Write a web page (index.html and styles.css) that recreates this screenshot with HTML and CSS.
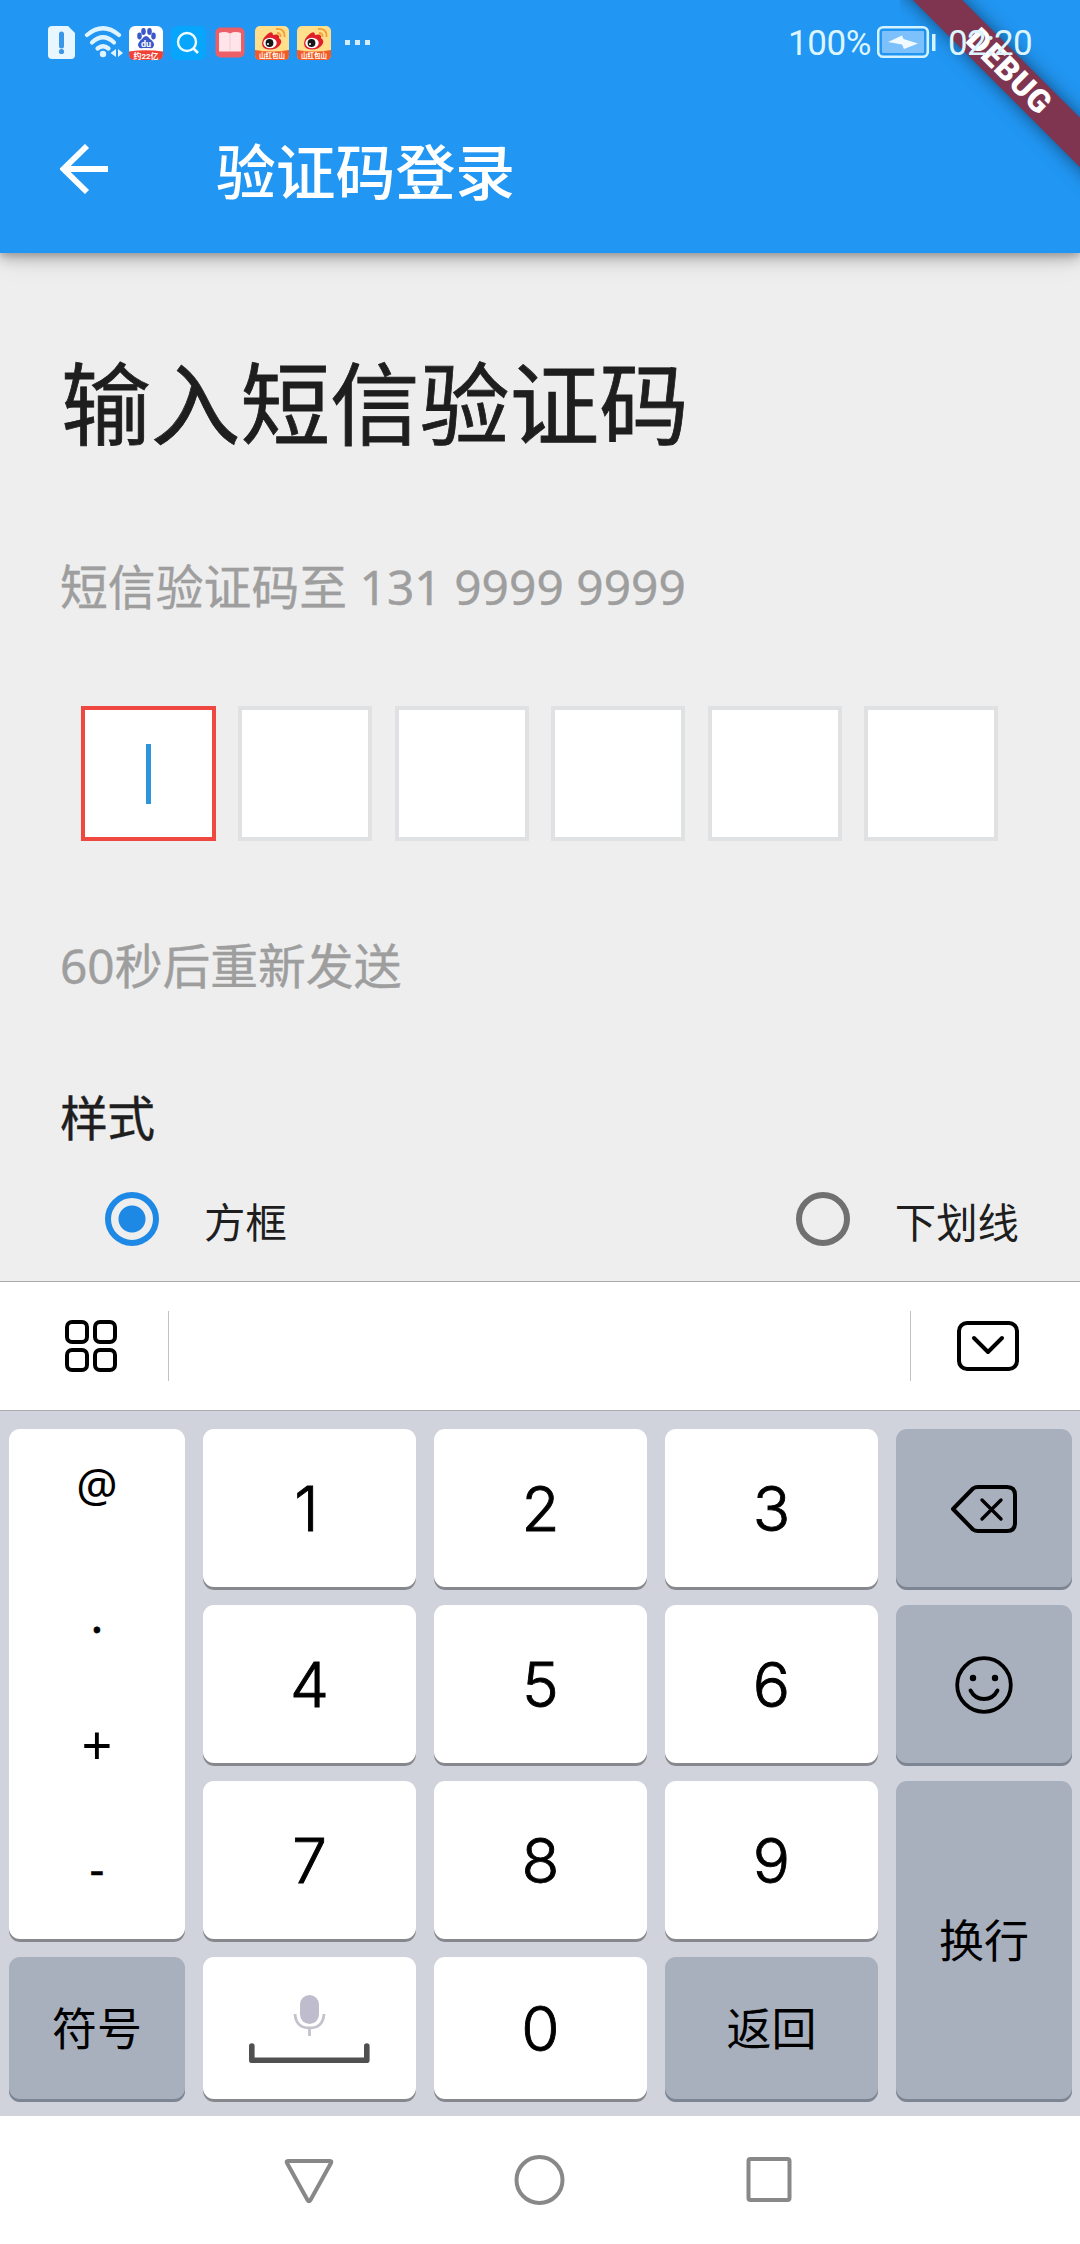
FILE: index.html
```html
<!DOCTYPE html>
<html lang="zh-CN">
<head>
<meta charset="utf-8">
<title>验证码登录</title>
<link rel="stylesheet" href="styles.css">
</head>
<body>
<div class="screen">
  <header class="app-bar">
    <div class="status-bar">
      <svg class="status-icons" width="330" height="40" viewBox="45 22 330 40">
        <path d="M52 26H68L75 33V55Q75 59 71 59H52Q48 59 48 55V30Q48 26 52 26Z" fill="#e8f6ff"/>
        <path d="M61.500 34V46" stroke="#3a96e6" stroke-width="5" stroke-linecap="round"/>
        <circle cx="61.500" cy="51.500" r="2.600" fill="#3a96e6"/>
        <g fill="none" stroke="#e0f4ff" stroke-width="4.200" stroke-linecap="round">
          <path d="M87 35Q103 21.500 119 35"/><path d="M92 42.500Q103 32 114 42.500"/><path d="M97.500 48.500Q103 44 108.500 48.500"/>
        </g>
        <circle cx="103" cy="54" r="3.200" fill="#e0f4ff"/>
        <path d="M116 49V57L110.500 53ZM118 49V57L123 53Z" fill="#e0f4ff"/>
        <rect x="129" y="26" width="34" height="34" rx="6" fill="#fff"/>
        <path d="M129 51.500Q146 49 163 51.500V54Q163 60 157 60H135Q129 60 129 54Z" fill="#ef4136"/>
        <g fill="#3c57c8"><ellipse cx="139.500" cy="36" rx="2.300" ry="3.400"/><ellipse cx="143.500" cy="31.500" rx="2.300" ry="3.400"/><ellipse cx="149.500" cy="31.500" rx="2.300" ry="3.400"/><ellipse cx="153.500" cy="36" rx="2.300" ry="3.400"/><path d="M146 36Q148 36 150 39Q154.500 42 154 45.500Q153 49 149 48H143Q139 49 138 45.500Q138 42 142 39Q144 36 146 36Z"/></g>
        <text class="icon-du" x="146" y="47">du</text>
        <text class="icon-sale" x="146" y="58.500">约22亿</text>
        <rect x="171" y="26" width="35" height="34" rx="6" fill="#07a5fb"/>
        <circle cx="187" cy="42" r="9" fill="none" stroke="#f0fbff" stroke-width="2.400"/><path d="M193.500 48.500L198 53" stroke="#f0fbff" stroke-width="2.600"/>
        <rect x="215.500" y="27.500" width="29" height="30" rx="5" fill="#ec5f67"/>
        <path d="M219 33Q225 31 230 33.500Q235 31 241 33V51.500H219Z" fill="#ffe4ea"/><path d="M230 34V51" stroke="#f8c9d3" stroke-width="1"/>
        <g id="weibo">
          <rect x="255" y="26" width="34" height="34" rx="5" fill="#ffdf8c"/>
          <path d="M255 50Q272 53 289 50V55Q289 60 284 60H260Q255 60 255 55Z" fill="#f15a24"/>
          <path d="M262 43Q263 37 269 33Q273 31 273 35Q280 33 279 38Q283 41 280 45Q276 50 269 49.500Q262 49 262 43Z" fill="#df2029"/>
          <ellipse cx="270" cy="43" rx="6.700" ry="5.200" fill="#fff"/><circle cx="269.500" cy="43" r="3.900" fill="#171717"/><circle cx="268" cy="44" r="1" fill="#fff"/>
          <path d="M276 29Q285 28 284.500 37M277 33Q281 33 280.500 37" fill="none" stroke="#efa03a" stroke-width="1.800"/>
          <text class="icon-sale weibo-sale" x="272" y="58">山红包山</text>
        </g>
        <use href="#weibo" x="42"/>
        <path d="M345 40h5v5h-5zM355 40h5v5h-5zM365 40h5v5h-5z" fill="#d3edff"/>
      </svg>
      <div class="status-right">
        <span class="battery-level">100%</span>
        <svg width="60" height="34" viewBox="877 25 60 34">
          <rect x="878.200" y="27.200" width="49.600" height="29.600" rx="5" fill="none" stroke="#d5f4ff" stroke-width="2.600"/>
          <rect x="882" y="31" width="42" height="22" rx="1" fill="#7cc1fb"/>
          <path d="M888 42L902 35.500L903.500 39L918 43.500L904 49L902 44.500Z" fill="#f1fbff"/>
          <path d="M932 34H935.500V51H932Z" fill="#d5f4ff"/>
        </svg>
        <span class="clock">02:20</span>
      </div>
    </div>
    <div class="title-bar">
      <svg width="50" height="50" viewBox="60 144 50 50"><path d="M108 169H64M87 146L63.500 169L87 192" fill="none" stroke="#fff" stroke-width="5.800"/></svg>
      <h1 class="page-title">验证码登录</h1>
    </div>
    <div class="debug-corner"><div class="debug-banner">DEBUG</div></div>
  </header>

  <main class="content">
    <h2 class="heading">输入短信验证码</h2>
    <p class="hint">短信验证码至 131 9999 9999</p>
    <div class="code-row">
      <div class="code-box focused"><i class="caret"></i></div>
      <div class="code-box"></div><div class="code-box"></div><div class="code-box"></div><div class="code-box"></div><div class="code-box"></div>
    </div>
    <p class="resend">60秒后重新发送</p>
    <p class="style-label">样式</p>
    <div class="radio-row">
      <div class="option"><span class="radio checked"></span><span>方框</span></div>
      <div class="option"><span class="radio"></span><span>下划线</span></div>
    </div>
  </main>

  <section class="keyboard">
    <div class="tools">
      <div class="tool-menu"><svg width="52" height="52" viewBox="0 0 52 52" fill="none" stroke="#000" stroke-width="4"><rect x="2" y="2" width="20" height="20" rx="5"/><rect x="30" y="2" width="20" height="20" rx="5"/><rect x="2" y="30" width="20" height="20" rx="5"/><rect x="30" y="30" width="20" height="20" rx="5"/></svg></div>
      <div class="tool-hide"><svg width="62" height="50" viewBox="0 0 62 50" fill="none" stroke="#000" stroke-width="4" stroke-linecap="round" stroke-linejoin="round"><rect x="2" y="2" width="58" height="46" rx="8"/><path d="M17 17L31 31L45 17"/></svg></div>
    </div>
    <div class="keys">
      <div class="key symbols"><span class="at">@</span><span class="dot">.</span><span class="plus">+</span><span class="minus">-</span></div>
      <div class="key one">1</div><div class="key">2</div><div class="key">3</div>
      <div class="key dark"><svg width="66" height="50" viewBox="951 1484 66 50" fill="none" stroke="#000" stroke-width="4" stroke-linecap="round" stroke-linejoin="round"><path d="M953 1509L973 1488.500Q975 1487 978 1487H1007Q1015 1487 1015 1495V1523Q1015 1531 1007 1531H978Q975 1531 973 1529.500Z"/><path d="M982 1500L1001 1519M1001 1500L982 1519" stroke-width="3.400"/></svg></div>
      <div class="key">4</div><div class="key">5</div><div class="key">6</div>
      <div class="key dark"><svg width="58" height="58" viewBox="0 0 58 58" fill="none" stroke="#000" stroke-width="3.800" stroke-linecap="round"><circle cx="29" cy="29" r="26.800"/><circle cx="18" cy="22" r="3.200" fill="#000" stroke="none"/><circle cx="40" cy="22" r="3.200" fill="#000" stroke="none"/><path d="M15.500 34.500Q20 43 29 43Q38 43 42.500 34.500"/></svg></div>
      <div class="key">7</div><div class="key">8</div><div class="key">9</div>
      <div class="key dark word enter">换行</div>
      <div class="key dark word">符号</div>
      <div class="key"><svg width="121" height="70" viewBox="249 1994 121 70"><rect x="300" y="1995" width="19" height="29" rx="9.500" fill="#bfbdcd"/><path d="M295 2014Q296 2028 309.500 2028Q323 2028 324 2014M309.500 2028V2036" fill="none" stroke="#c3c2cd" stroke-width="2.800"/><path d="M251.800 2046V2060.200H366.800V2046" fill="none" stroke="#505050" stroke-width="5.600" stroke-linecap="round" stroke-linejoin="round"/></svg></div>
      <div class="key">0</div>
      <div class="key dark word">返回</div>
    </div>
  </section>

  <nav class="nav-bar">
    <svg width="52" height="52" viewBox="0 0 52 52"><path d="M5 7H47Q49 7 48 9L27.500 46Q26 48.500 24.500 46L4 9Q3 7 5 7Z"/></svg>
    <svg width="52" height="52" viewBox="0 0 52 52"><circle cx="26.500" cy="26" r="23"/></svg>
    <svg width="52" height="52" viewBox="0 0 52 52"><rect x="5.500" y="5" width="41" height="41" rx="2"/></svg>
  </nav>
</div>
</body>
</html>
```
FILE: styles.css
```css
* { box-sizing: border-box; }
body { margin: 0; background: #eee; }
h1, h2, p { margin: 0; font-weight: 400; }
svg { display: block; flex: none; }

.screen {
  width: 1080px;
  height: 2244px;
  display: flex;
  flex-direction: column;
  overflow: hidden;
  font-family: "Noto Sans", "Noto Sans CJK SC", sans-serif;
  color: #1e1e1e;
}

/* App bar */
.app-bar {
  position: relative;
  height: 253px;
  flex: none;
  background: #2196f3;
  box-shadow: 0 6px 12px rgba(0, 0, 0, .22), 0 12px 24px -2px rgba(0, 0, 0, .08), 0 3px 5px rgba(0, 0, 0, .12);
}
.status-bar {
  position: relative;
  z-index: 2;
  height: 84px;
  display: flex;
  justify-content: space-between;
  align-items: center;
  padding: 0 48px 0 45px;
}
.status-right {
  display: flex;
  align-items: center;
  font: 35px/40px Roboto, sans-serif;
  color: #dcf5ff;
}
.battery-level { width: 89px; margin-top: 4px; letter-spacing: -.4px; }
.clock { width: 84px; margin: 4px 0 0 11px; white-space: nowrap; letter-spacing: -.6px; }
.icon-du { font: 700 9px Roboto, sans-serif; fill: #fff; text-anchor: middle; }
.icon-sale { font: 700 8px Roboto, "Noto Sans CJK SC", sans-serif; fill: #fff; text-anchor: middle; }
.weibo-sale { font-size: 6.5px; }
.title-bar {
  height: 169px;
  display: flex;
  align-items: flex-start;
  gap: 106px;
  padding: 60px 0 0 60px;
}
.page-title {
  margin-top: -2px;
  font-size: 59.8px;
  line-height: 60px;
  font-weight: 500;
  color: #fff;
}
.debug-corner {
  position: absolute;
  z-index: 1;
  top: 0;
  right: 0;
  width: 180px;
  height: 240px;
  overflow: hidden;
}
.debug-banner {
  position: absolute;
  left: -91.5px;
  top: 54px;
  width: 400px;
  height: 35px;
  transform: rotate(45deg);
  background: #7f3550;
  box-shadow: 0 0 18px rgba(0, 0, 0, .5);
  font: 900 32px/35px Roboto, sans-serif;
  letter-spacing: .7px;
  text-align: center;
  color: #fff;
}

/* Verification form */
.content {
  flex: 1;
  background: #eee;
  padding: 105px 60px 0;
  position: relative;
  z-index: -1;
}
.heading {
  height: 90px;
  padding-left: 1px;
  font-size: 89.7px;
  line-height: 90px;
  -webkit-text-stroke: .8px currentColor;
}
.hint, .resend, .style-label { height: 48px; font-size: 47.8px; line-height: 48px; }
.hint { margin-top: 115px; color: #9e9e9e; letter-spacing: .05px; -webkit-text-stroke: .4px currentColor; }
.code-row {
  display: flex;
  justify-content: space-between;
  margin-top: 95px;
  padding: 0 22px 0 21px;
}
.code-box {
  width: 134px;
  height: 135px;
  border: 4px solid #e0e1e2;
  background: #fff;
  display: flex;
  align-items: center;
  justify-content: center;
}
.code-box.focused { width: 135px; border-color: #ee4840; }
.caret { width: 5px; height: 60px; background: #2e94db; }
.resend { margin-top: 101px; color: #9e9e9e; -webkit-text-stroke: .4px currentColor; }
.style-label { margin-top: 104px; letter-spacing: -.6px; -webkit-text-stroke: .4px currentColor; }
.radio-row {
  display: flex;
  justify-content: space-between;
  margin-top: 50px;
  padding: 0 1px 0 45px;
}
.option {
  display: flex;
  align-items: center;
  gap: 45px;
  height: 54px;
  font-size: 41.4px;
  line-height: 46px;
}
.option span + span { margin-top: 5px; }
.radio {
  width: 54px;
  height: 54px;
  border: 6px solid #707070;
  border-radius: 50%;
}
.radio.checked {
  border-color: #1e88e5;
  background: radial-gradient(circle, #1e88e5 13px, transparent 14px);
}

/* Keyboard */
.keyboard { flex: none; height: 835px; background: #d1d3dc; }
.tools {
  height: 130px;
  background: #fff;
  border-top: 1px solid #a9a9a9;
  border-bottom: 1px solid #acacb0;
  display: flex;
  justify-content: space-between;
  align-items: center;
}
.tool-menu, .tool-hide { display: flex; align-items: center; height: 70px; }
.tool-menu { width: 169px; padding-left: 65px; border-right: 1px solid #c2c2c2; }
.tool-hide { width: 170px; padding-left: 46px; border-left: 1px solid #c2c2c2; }
.keys {
  display: grid;
  grid-template-columns: 176px 213px 213px 213px 176px;
  grid-template-rows: 161.5px 161.5px 161.5px 145px;
  gap: 14.5px 18px;
  padding: 17.5px 8px 0 9px;
}
.key {
  display: flex;
  align-items: center;
  justify-content: center;
  border-radius: 11px;
  padding-bottom: 1px;
  background: #fff;
  box-shadow: inset 0 -3px #87888e;
  font: 300 62px/60px Inter, sans-serif;
  color: #000;
  -webkit-text-stroke: .9px #000;
}
.key.one { padding-right: 6px; }
.key.dark { background: #a8afbd; box-shadow: inset 0 -3px #7d8492; }
.key.word {
  padding-bottom: 0;
  font: 400 45px/50px "Noto Sans", "Noto Sans CJK SC", sans-serif;
  -webkit-text-stroke: 0;
}
.key.enter { grid-row: 3 / 5; grid-column: 5; }
.key.symbols {
  grid-row: 1 / 4;
  flex-direction: column;
  justify-content: flex-start;
  font: 46px/50px "Noto Sans", sans-serif;
  -webkit-text-stroke: 0;
}
.at { margin-top: 30px; }
.dot { margin-top: 81px; -webkit-text-stroke: .8px #000; }
.plus { margin-top: 79px; font-size: 54px; }
.minus { margin-top: 73px; -webkit-text-stroke: .5px #000; }

/* System navigation */
.nav-bar {
  flex: none;
  height: 128px;
  padding-right: 2px;
  background: #fff;
  display: flex;
  justify-content: center;
  align-items: center;
  gap: 178px;
  fill: none;
  stroke: #888;
  stroke-width: 4;
}
```
